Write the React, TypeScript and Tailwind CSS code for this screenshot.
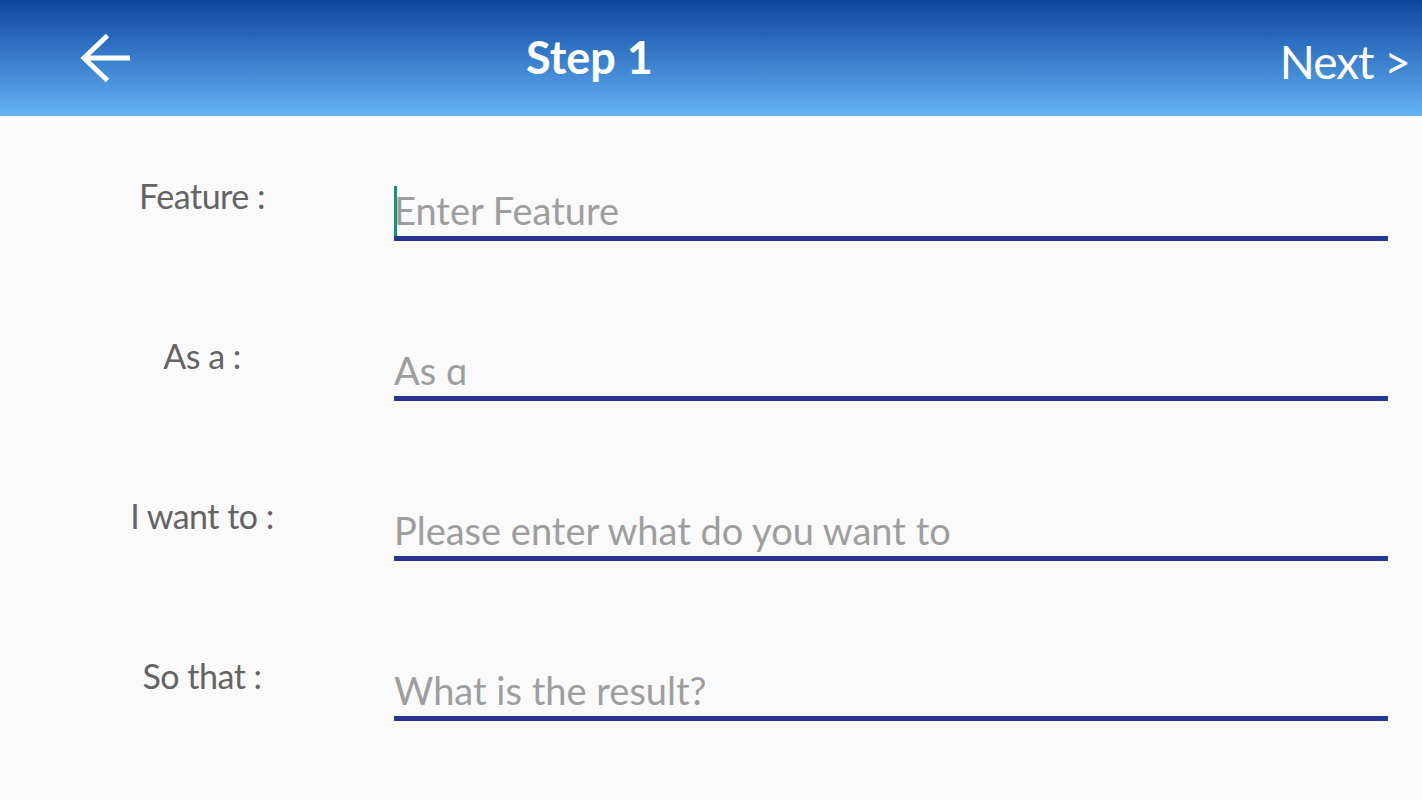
import { useState } from 'react';

const FIELDS = [
  { label: 'Feature :', placeholder: 'Enter Feature', focused: true },
  { label: 'As a :', placeholder: 'As ɑ', focused: false },
  { label: 'I want to :', placeholder: 'Please enter what do you want to', focused: false },
  { label: 'So that :', placeholder: 'What is the result?', focused: false },
];

export default function App() {
  const [values, setValues] = useState<string[]>(['', '', '', '']);

  return (
    <div className="flex min-h-[800px] flex-col bg-[#fafafa] font-['Lato','Noto_Sans',sans-serif]">
      {/* ------------------ App bar ------------------ */}
      <header className="flex h-[116px] shrink-0 items-start bg-gradient-to-b from-[#0d46a0] to-[#65b4f5] text-white">
        <button className="ml-[80px] mt-[32px] h-[52px] w-[52px]" aria-label="Back">
          <svg viewBox="0 0 52 52" width="52" height="52" fill="none" stroke="white" strokeWidth="5">
            <path d="M4 26H50" />
            <path d="M27.5 3.5L4 26L27.5 48.5" strokeLinejoin="miter" />
          </svg>
        </button>
        <h1 className="ml-[394px] mt-[35px] text-[45px] font-bold leading-[45px]">
          Step 1
        </h1>
        <div className="flex-1" />
        <button className="mr-[12px] mt-[39px] text-[46px] leading-[46px] tracking-[-1px]">
          Next &gt;
        </button>
      </header>

      {/* ------------------ Form ------------------ */}
      <main className="flex flex-col pt-[64px]">
        {FIELDS.map((f, i) => (
          <div key={f.label} className="flex h-[160px] items-start">
            <div className="-mt-[1px] w-[394px] pl-[10px] text-center text-[34px] leading-[34px] tracking-[-0.5px] text-[#646464]">
              {f.label}
            </div>
            <div className="relative mr-[34px] flex h-[61px] flex-1 flex-col justify-end border-b-[5px] border-[#283593]">
              {f.focused && (
                <span className="absolute left-0 top-[6px] h-[50px] w-[3px] bg-[#0f9678]" />
              )}
              <input
                value={values[i]}
                onChange={(e) =>
                  setValues((prev) => prev.map((v, j) => (j === i ? e.target.value : v)))
                }
                placeholder={f.placeholder}
                className="h-[44px] w-full bg-transparent pb-[8px] text-[38px] text-[#555] caret-[#0f9678] outline-none placeholder:text-[#9e9e9e]"
              />
            </div>
          </div>
        ))}
      </main>
    </div>
  );
}
